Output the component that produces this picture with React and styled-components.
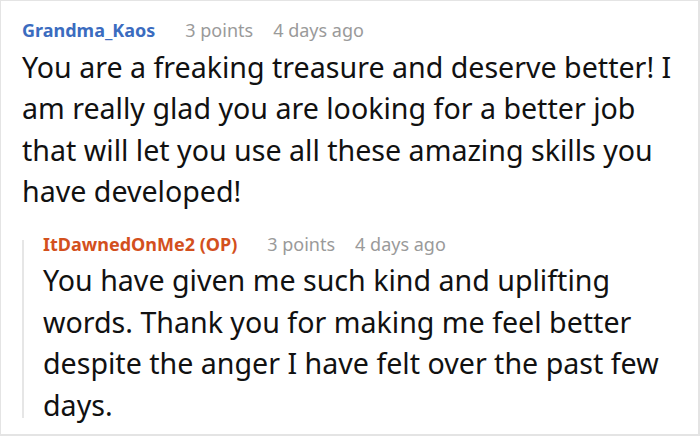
import React from "react";
import styled, { createGlobalStyle } from "styled-components";

const GlobalStyle = createGlobalStyle`
  html, body {
    margin: 0;
    padding: 0;
    background: #fff;
  }
  body {
    font-family: "Noto Sans", "Open Sans", sans-serif;
  }
`;

const Frame = styled.div`
  box-sizing: border-box;
  width: 700px;
  height: 436px;
  border: 1px solid #e4e4e4;
  border-right-width: 2px;
  border-bottom-width: 2px;
  padding: 17px 10px 0 21px;
  overflow: hidden;
`;

const Comment = styled.div`
  display: flex;
  flex-direction: column;
`;

const Meta = styled.div`
  display: flex;
  align-items: baseline;
  gap: 20px;
  font-size: 18px;
  line-height: 24.5px;
  margin-top: ${({ $nested }) => ($nested ? "-8.7px" : "0")};
`;

const Author = styled.span`
  font-weight: 700;
  color: ${({ $op }) => ($op ? "#d3501d" : "#3b6cbf")};
  margin-right: 10px;
`;

const Info = styled.span`
  color: #9a9a9a;
`;

const Body = styled.p`
  margin: 3.4px 0 ${({ $nested }) => ($nested ? "-7px" : "0")};
  font-size: 28.6px;
  line-height: 41.5px;
  color: #111;
`;

const Reply = styled.div`
  display: flex;
  flex-direction: column;
  margin-top: 28.3px;
  border-left: 2px solid #e6e6e6;
  padding-left: 19px;
`;

const CommentItem = ({ author, op, nested, points, time, children }) => (
  <Comment>
    <Meta $nested={nested}>
      <Author $op={op}>{author}</Author>
      <Info>{points}</Info>
      <Info>{time}</Info>
    </Meta>
    <Body $nested={nested}>{children}</Body>
  </Comment>
);

export default function App() {
  return (
    <>
      <GlobalStyle />
      <Frame>
        <CommentItem author="Grandma_Kaos" points="3 points" time="4 days ago">
          You are a freaking treasure and deserve better! I am really glad you
          are looking for a better job that will let you use all these amazing
          skills you have developed!
        </CommentItem>
        <Reply>
          <CommentItem
            author="ItDawnedOnMe2 (OP)"
            op
            nested
            points="3 points"
            time="4 days ago"
          >
            You have given me such kind and uplifting words. Thank you for
            making me feel better despite the anger I have felt over the past
            few days.
          </CommentItem>
        </Reply>
      </Frame>
    </>
  );
}
